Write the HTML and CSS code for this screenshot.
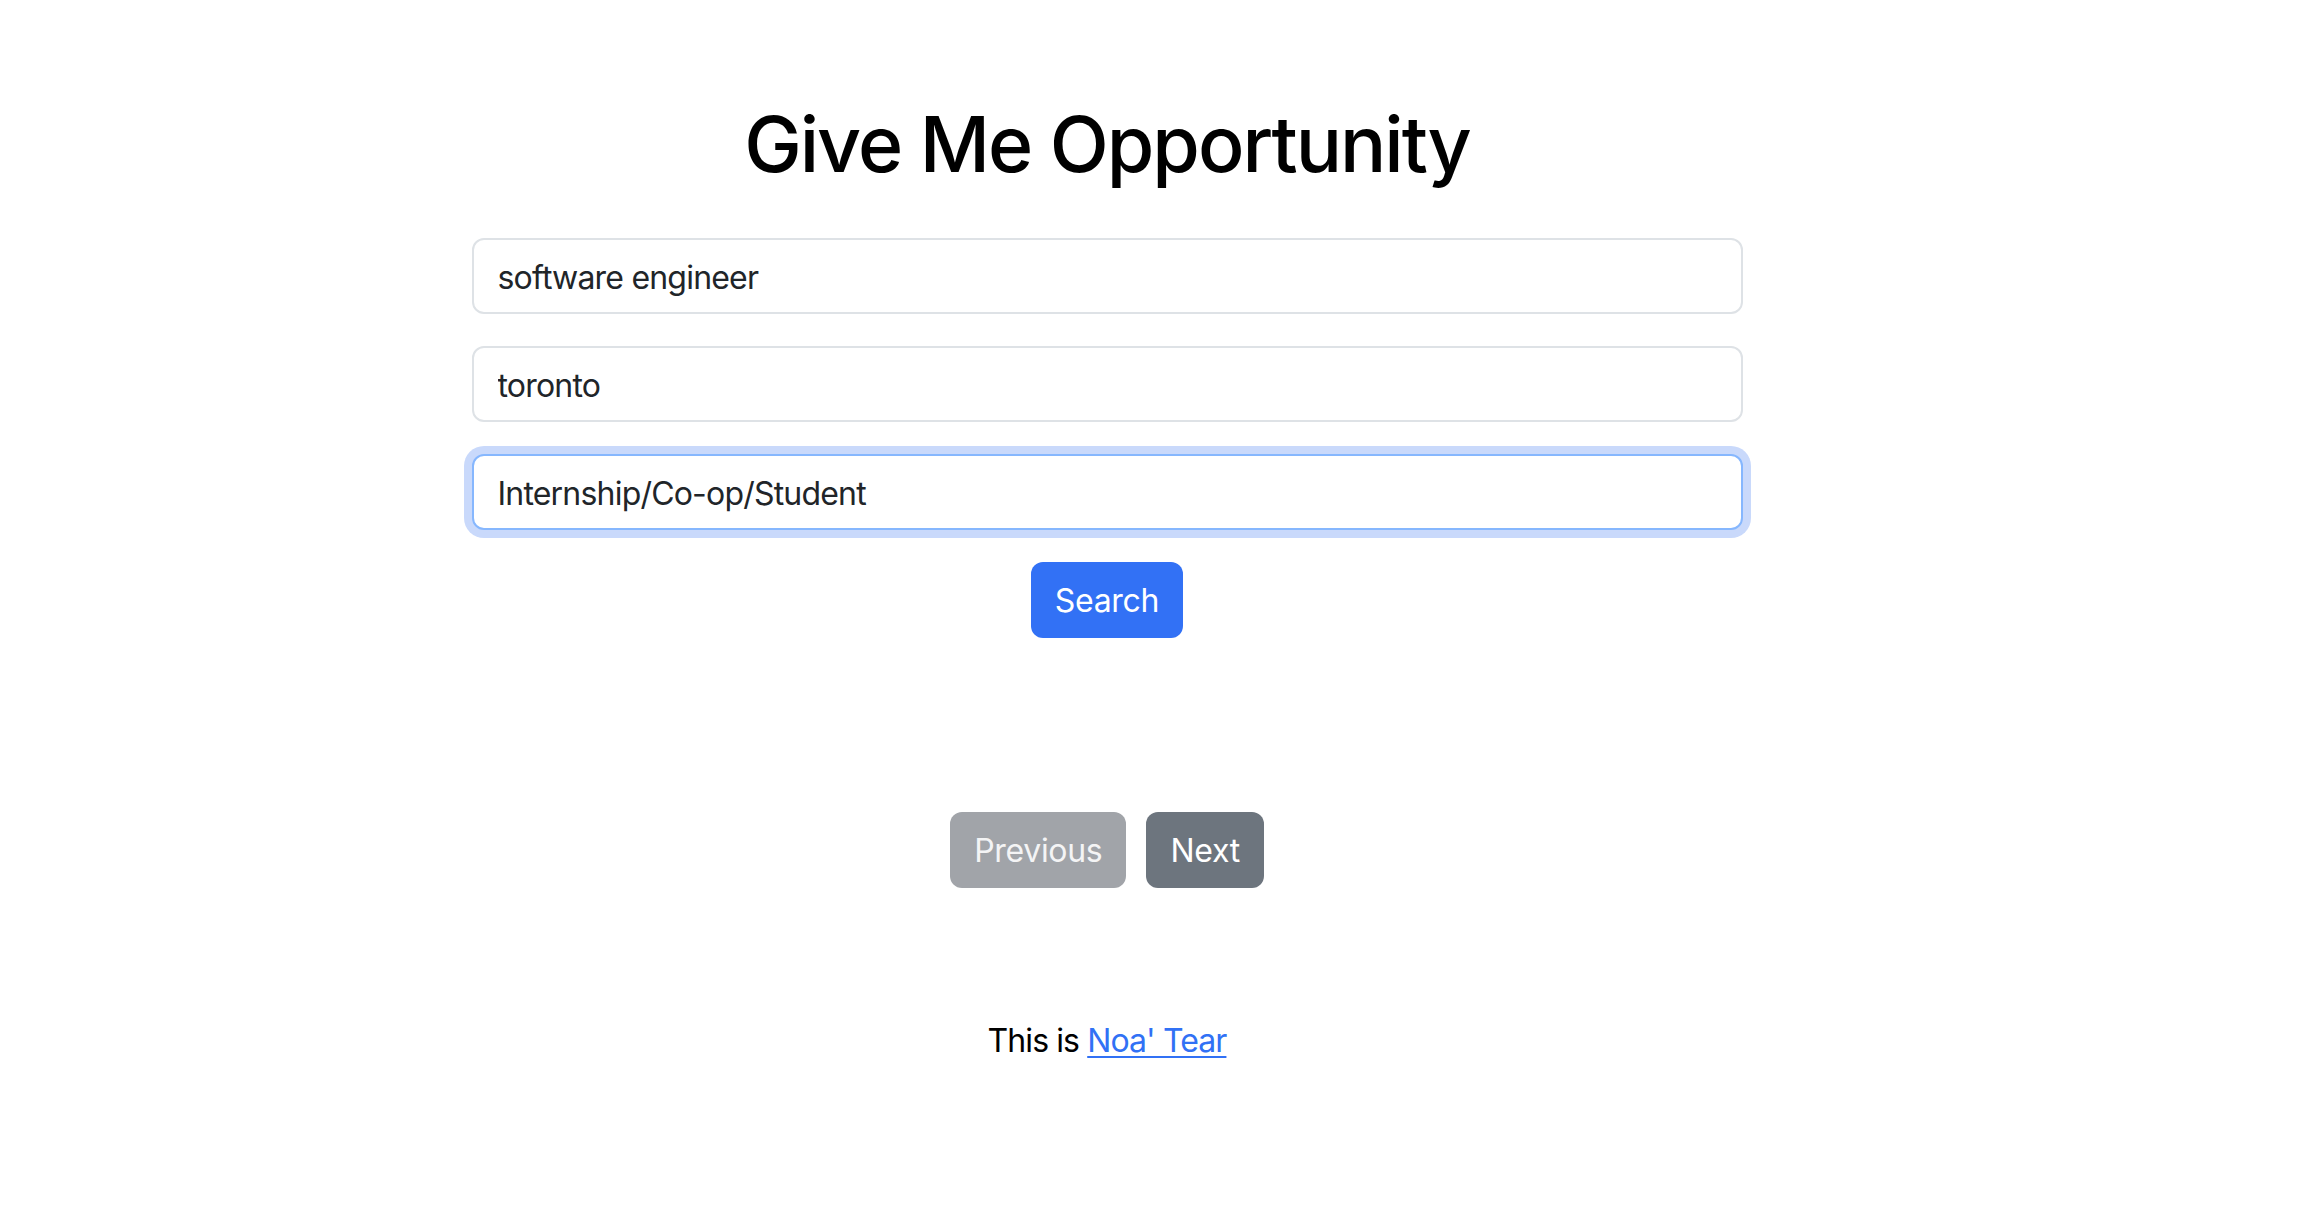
FILE: index.html
```html
<!DOCTYPE html>
<html lang="en">
<head>
<meta charset="utf-8">
<title>Give Me Opportunity</title>
<link rel="stylesheet" href="styles.css">
</head>
<body>
<main class="page">
  <h1 class="title">Give Me Opportunity</h1>
  <form class="search-form">
    <input class="field" type="text" value="software engineer">
    <input class="field" type="text" value="toronto">
    <input class="field field-focus" type="text" value="Internship/Co-op/Student">
    <button class="btn btn-primary" type="button">Search</button>
  </form>
  <nav class="pager">
    <button class="btn btn-secondary btn-disabled" type="button">Previous</button>
    <button class="btn btn-secondary" type="button">Next</button>
  </nav>
  <footer class="footer">This is <a class="footer-link" href="#">Noa' Tear</a></footer>
</main>
</body>
</html>
```

FILE: styles.css
```css
html, body {
  margin: 0;
  padding: 0;
  background: #ffffff;
}

body {
  font-family: Inter, "Noto Sans", "Liberation Sans", sans-serif;
  color: #212529;
}

.page {
  width: 2214px;
  display: flex;
  flex-direction: column;
  align-items: center;
  padding-top: 96px;
}

.title {
  margin: 0;
  font-size: 77px;
  line-height: 96px;
  font-weight: 500;
  color: #000000;
  letter-spacing: -2px;
}

.search-form {
  margin-top: 46px;
  width: 1271px;
  display: flex;
  flex-direction: column;
  align-items: center;
  gap: 32px;
}

.field {
  box-sizing: border-box;
  width: 100%;
  height: 76px;
  padding: 2px 24px 0;
  border: 2px solid #dee2e6;
  border-radius: 12px;
  font-family: Inter, "Noto Sans", sans-serif;
  font-size: 32px;
  color: #212529;
  background: #ffffff;
  outline: none;
  letter-spacing: -0.8px;
}

.field-focus {
  border-color: #86b7fe;
  box-shadow: 0 0 0 8px #c9d9fb;
}

.btn {
  box-sizing: border-box;
  height: 76px;
  padding: 0 24px;
  border: none;
  border-radius: 12px;
  font-family: Inter, "Noto Sans", sans-serif;
  font-size: 32px;
  color: #ffffff;
  cursor: pointer;
  letter-spacing: -0.3px;
}

.btn-primary {
  background: #3271f5;
}

.btn-secondary {
  background: #6d757e;
}

.btn-disabled {
  background: #a1a4a9;
  color: #f4f4f5;
}

.pager {
  margin-top: 174px;
  display: flex;
  gap: 20px;
}

.footer {
  margin-top: 129px;
  font-size: 32px;
  line-height: 48px;
  color: #000000;
  letter-spacing: -0.9px;
}

.footer-link {
  color: #3171f5;
  text-decoration: underline;
  text-decoration-thickness: 2px;
  text-underline-offset: 4px;
}
```
